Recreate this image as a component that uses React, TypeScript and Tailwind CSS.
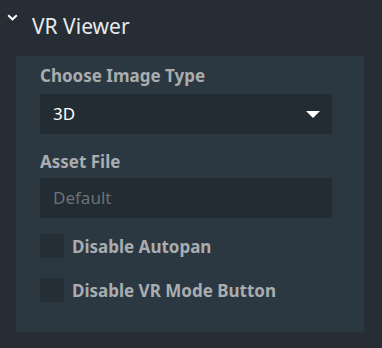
const FONT = 'font-["Noto_Sans",sans-serif]';

const Checkbox = ({ label }: { label: string }) => (
  <label className="flex items-center gap-2 h-6">
    <span className="w-6 h-6 bg-[#252e35] shrink-0" />
    <span className="text-[17px] font-bold text-[#a9adb0] leading-[23px]">{label}</span>
  </label>
);

export default function App() {
  return (
    <div className={`${FONT} w-[382px] h-[348px] bg-[#262d34] overflow-hidden`}>
      {/* Header */}
      <div className="h-[56px] flex items-start pl-[7px] pt-[12px]">
        <svg width="11" height="7" viewBox="0 0 11 7" className="mt-[2px]">
          <path d="M1.2 1.2 L5.5 5.3 L9.8 1.2" stroke="#ffffff" strokeWidth="2" fill="none" />
        </svg>
        <span className="ml-[14px] text-[21px] leading-[29px] text-[#e8eaeb]">VR Viewer</span>
      </div>

      {/* Panel */}
      <div className="ml-4 w-[348px] h-[276px] bg-[#2c3841] pl-6 pr-8 pt-[8px]">
        <div className="text-[17px] font-bold text-[#a9adb0] leading-[23px]">Choose Image Type</div>
        <div className="mt-[7px] h-[40px] bg-[#232c33] flex items-center justify-between pl-[13px] pr-3">
          <span className="text-[17px] text-white">3D</span>
          <svg width="14" height="7" viewBox="0 0 14 7">
            <path d="M0 0 H14 L7 7 Z" fill="#ffffff" />
          </svg>
        </div>

        <div className="mt-[16px] text-[17px] font-bold text-[#a9adb0] leading-[23px]">Asset File</div>
        <div className="mt-[5px] h-[40px] bg-[#232c33] flex items-center pl-[13px]">
          <span className="text-[17px] text-[#6a7277]">Default</span>
        </div>

        <div className="mt-4 flex flex-col gap-5">
          <Checkbox label="Disable Autopan" />
          <Checkbox label="Disable VR Mode Button" />
        </div>
      </div>
    </div>
  );
}
